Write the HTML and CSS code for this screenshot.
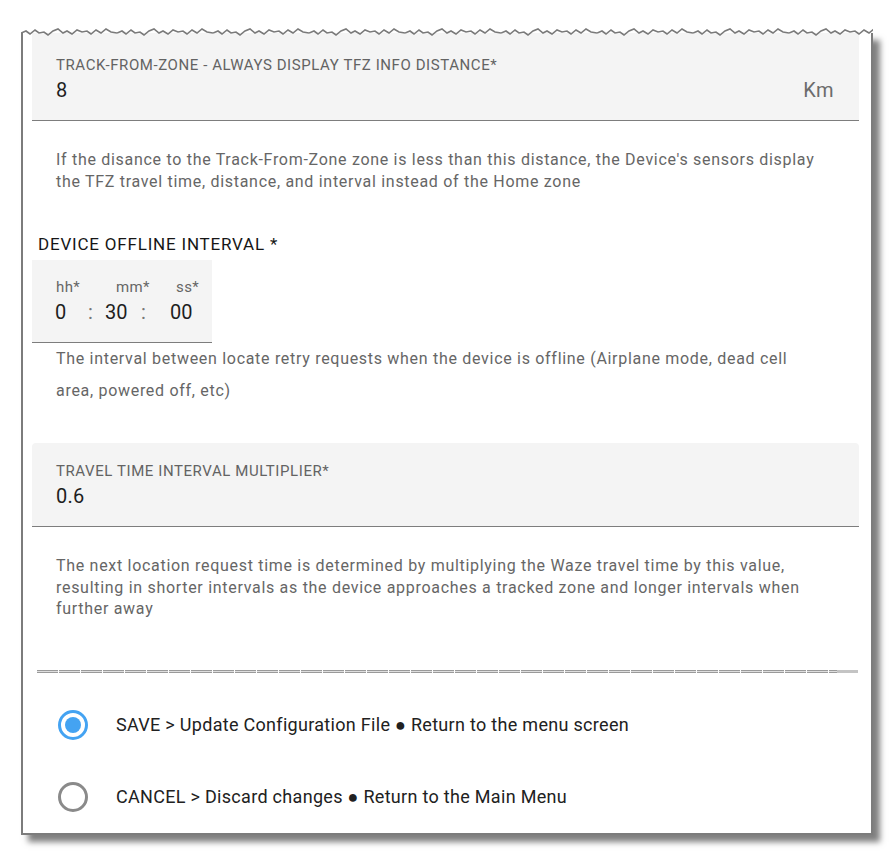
FILE: index.html
```html
<!DOCTYPE html>
<html>
<head>
<meta charset="utf-8">
<link rel="stylesheet" href="styles.css">
</head>
<body>
<div class="frame">
  <svg class="torn" width="852" height="10" viewBox="0 0 852 10" preserveAspectRatio="none">
    <defs>
      <pattern id="zig" width="96" height="10" patternUnits="userSpaceOnUse">
        <path d="M0,5 L5,3 L9,6 L14,2 L18,5 L23,4 L27,7 L32,3 L37,1 L42,5 L46,3 L51,6 L56,2 L61,4 L66,3 L70,6 L75,2 L80,5 L85,1 L90,4 L96,5" fill="none" stroke="#7a7a7a" stroke-width="1.6"/>
      </pattern>
    </defs>
    <rect x="0" y="0" width="852" height="10" fill="url(#zig)"/>
  </svg>
  <div class="content">
    <div class="field first">
      <div class="label">TRACK-FROM-ZONE - ALWAYS DISPLAY TFZ INFO DISTANCE*</div>
      <div class="value-row"><span class="value">8</span><span class="suffix">Km</span></div>
    </div>
    <div class="helper h1">If the disance to the Track-From-Zone zone is less than this distance, the Device's sensors display the TFZ travel time, distance, and interval instead of the Home zone</div>

    <div class="heading">DEVICE OFFLINE INTERVAL *</div>
    <div class="timebox">
      <div class="trow labels"><span class="tl">hh*</span><span class="tl">mm*</span><span class="tl">ss*</span></div>
      <div class="trow values"><span class="t0">0</span><span class="tc1">:</span><span class="t30">30</span><span class="tc2">:</span><span>00</span></div>
    </div>
    <div class="helper h2">The interval between locate retry requests when the device is offline (Airplane mode, dead cell area, powered off, etc)</div>

    <div class="field third">
      <div class="label">TRAVEL TIME INTERVAL MULTIPLIER*</div>
      <div class="value-row"><span class="value">0.6</span></div>
    </div>
    <div class="helper h3">The next location request time is determined by multiplying the Waze travel time by this value, resulting in shorter intervals as the device approaches a tracked zone and longer intervals when further away</div>

    <div class="separator"></div>

    <div class="radio-row">
      <span class="radio checked"></span>
      <span class="rtext">SAVE &gt; Update Configuration File ● Return to the menu screen</span>
    </div>
    <div class="radio-row">
      <span class="radio"></span>
      <span class="rtext">CANCEL &gt; Discard changes ● Return to the Main Menu</span>
    </div>
  </div>
</div>
</body>
</html>
```
FILE: styles.css
```css
html, body {
  margin: 0;
  padding: 0;
  background: #ffffff;
}
body {
  font-family: Roboto, "Liberation Sans", sans-serif;
  width: 895px;
  height: 857px;
  overflow: hidden;
}
.frame {
  position: relative;
  margin: 33px 0 0 21px;
  width: 848px;
  height: 800px;
  border-left: 2px solid #7c7c7c;
  border-right: 2px solid #7c7c7c;
  border-bottom: 2px solid #7c7c7c;
  box-shadow: 7px 7px 6px rgba(0, 0, 0, 0.5);
  background: #fff;
}
.torn {
  position: absolute;
  top: -5px;
  left: -2px;
  display: block;
}
.content {
  padding: 0 12px 0 9px;
}
.field {
  background: #f4f4f4;
  border-bottom: 1px solid #7d7d7d;
  padding: 0 25px 0 24px;
  box-sizing: border-box;
}
.field.first {
  height: 88px;
  padding-top: 22px;
}
.field.third {
  height: 84px;
  padding-top: 18px;
  margin-top: 36px;
  border-radius: 4px 4px 0 0;
}
.label {
  font-size: 15px;
  line-height: 20px;
  color: #636363;
  letter-spacing: 0.58px;
}
.value-row {
  display: flex;
  justify-content: space-between;
  align-items: center;
  height: 26px;
  margin-top: 2px;
}
.value {
  font-size: 20px;
  color: #1e1e1e;
  letter-spacing: 0.3px;
}
.suffix {
  font-size: 20px;
  color: #6c6c6c;
  letter-spacing: 0.4px;
}
.helper {
  font-size: 16px;
  color: #666;
  letter-spacing: 0.7px;
  padding-left: 24px;
  padding-right: 39px;
}
.h1 {
  margin-top: 28px;
  line-height: 22px;
}
.heading {
  margin-top: 41px;
  padding-left: 6px;
  font-size: 17px;
  line-height: 20px;
  letter-spacing: 0.8px;
  color: #161616;
}
.timebox {
  margin-top: 6px;
  width: 180px;
  height: 83px;
  box-sizing: border-box;
  background: #f4f4f4;
  border-bottom: 1px solid #7d7d7d;
  padding-top: 17px;
}
.trow {
  display: flex;
}
.labels {
  padding-left: 24px;
  font-size: 15px;
  line-height: 20px;
  letter-spacing: 0.4px;
  color: #666;
}
.tl {
  flex: none;
  width: 60px;
}
.values {
  padding-left: 23px;
  font-size: 20px;
  line-height: 26px;
  color: #1e1e1e;
  margin-top: 2px;
}
.values span {
  flex: none;
}
.t0 { width: 33px; }
.tc1 { width: 17px; color: #777; }
.t30 { width: 36px; }
.tc2 { width: 29px; color: #777; }
.h2 {
  line-height: 32px;
}
.h3 {
  margin-top: 28px;
  line-height: 21.5px;
}
.separator {
  margin: 50px 0 0 5px;
  width: 821px;
  height: 3px;
  background:
    linear-gradient(to right, transparent 800px, #c4c4c4 800px),
    repeating-linear-gradient(to right, transparent 0, transparent 21px, #ffffff 21px, #ffffff 22px),
    linear-gradient(to bottom, #9a9a9a 0, #9a9a9a 1px, #dedede 1px, #dedede 2px, #9a9a9a 2px);
}
.separator + .radio-row {
  margin-top: 16px;
}
.radio-row {
  display: flex;
  align-items: center;
  height: 72px;
  padding-left: 26px;
}
.radio {
  width: 30px;
  height: 30px;
  box-sizing: border-box;
  border-radius: 50%;
  border: 3px solid #8a8a8a;
  position: relative;
  flex: none;
}
.radio.checked {
  border-color: #44a3f2;
}
.radio.checked::after {
  content: "";
  position: absolute;
  left: 4px;
  top: 4px;
  width: 16px;
  height: 16px;
  border-radius: 50%;
  background: #44a3f2;
}
.rtext {
  margin-left: 28px;
  font-size: 18px;
  color: #212121;
  letter-spacing: 0.3px;
}
```
